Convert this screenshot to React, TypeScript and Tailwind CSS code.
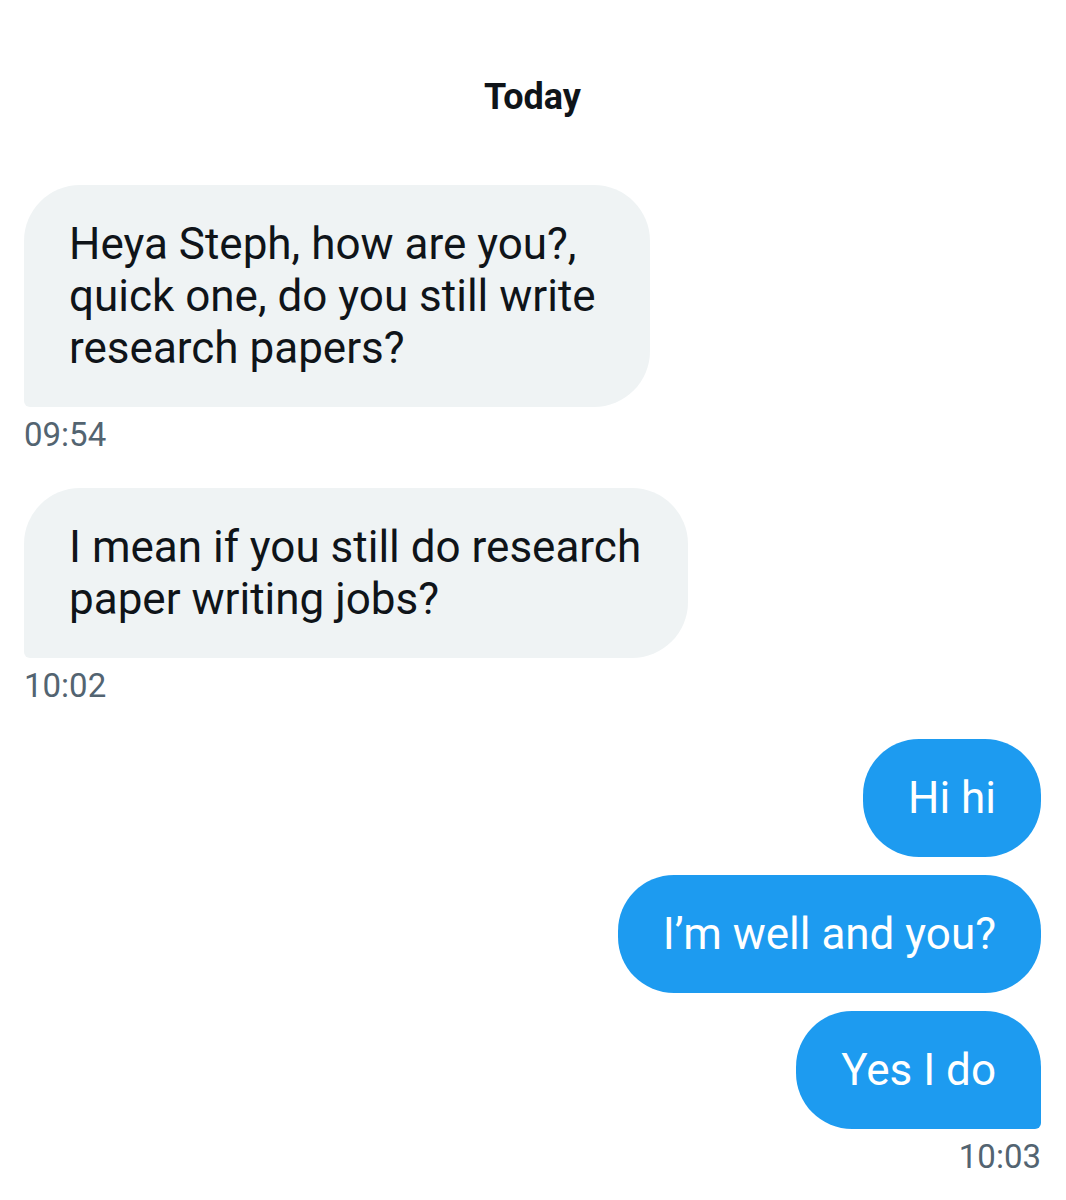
import React from "react";

type Msg = { text: string; mine: boolean; last?: boolean };

const incoming: Msg[][] = [
  [{ text: "Heya Steph, how are you?, quick one, do you still write research papers?", mine: false, last: true }],
  [{ text: "I mean if you still do research paper writing jobs?", mine: false, last: true }],
];

function Bubble({ text, mine, last }: Msg) {
  const base =
    "w-fit px-[45px] py-[33px] text-[44px] leading-[52px] rounded-[56px]";
  if (mine) {
    return (
      <div
        className={`${base} bg-[#1d9bf0] text-white ${last ? "rounded-br-[6px]" : ""}`}
      >
        {text}
      </div>
    );
  }
  return (
    <div className={`${base} bg-[#eff3f4] text-[#0f1419] rounded-bl-[6px]`}>
      {text}
    </div>
  );
}

function Time({ children, right }: { children: string; right?: boolean }) {
  return (
    <div
      className={`mt-[10px] text-[33px] leading-[36px] text-[#536471] ${right ? "text-right" : ""}`}
    >
      {children}
    </div>
  );
}

export default function App() {
  return (
    <div
      className="min-h-[1200px] w-full bg-white pl-6 pr-[25px]"
      style={{ fontFamily: "Roboto, 'Liberation Sans', Arial, sans-serif" }}
    >
      {/* previous day's timestamp, scrolled off the top */}
      <div className="h-[6px] overflow-hidden text-right">
        <div className="-mt-[32px] text-[33px] leading-[36px] text-[#536471]">22:30</div>
      </div>

      <div className="mt-[71px] text-center text-[36px] font-bold leading-[40px] text-[#0f1419]">
        Today
      </div>

      <div className="mt-[68px] max-w-[626px]">
        <Bubble {...incoming[0][0]} />
        <Time>09:54</Time>
      </div>

      <div className="mt-[35px] max-w-[664px]">
        <Bubble {...incoming[1][0]} />
        <Time>10:02</Time>
      </div>

      <div className="mt-[35px] flex flex-col items-end gap-[18px]">
        <Bubble text="Hi hi" mine />
        <Bubble text="I’m well and you?" mine />
        <Bubble text="Yes I do" mine last />
      </div>
      <Time right>10:03</Time>
    </div>
  );
}
